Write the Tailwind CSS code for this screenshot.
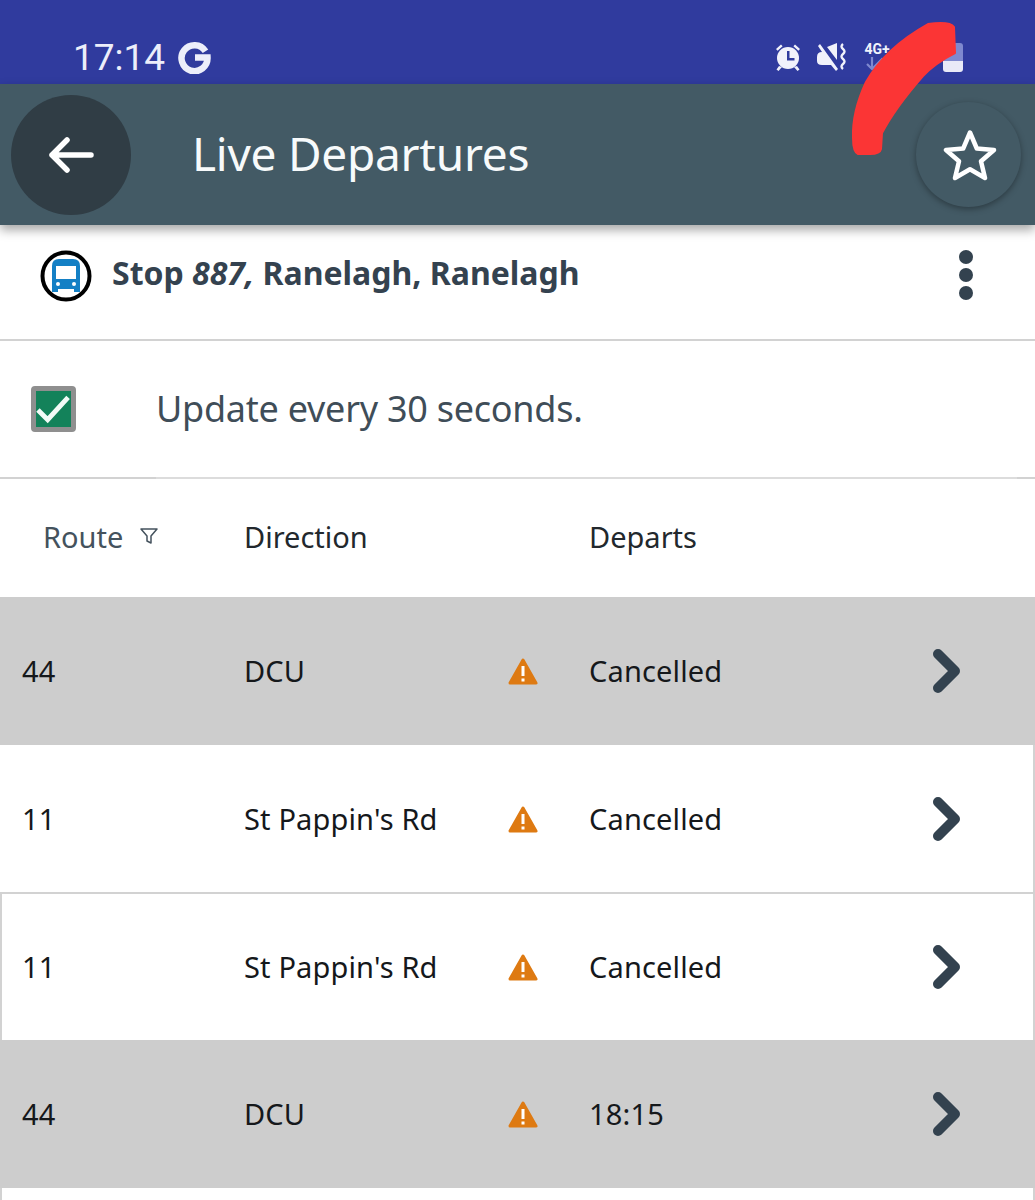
<!DOCTYPE html>
<html><head><meta charset="utf-8"><script src="https://cdn.jsdelivr.net/npm/@tailwindcss/browser@4"></script></head>
<body class="m-0 bg-white">
<div class="relative w-[1035px] h-[1200px] overflow-hidden bg-white font-['Noto_Sans','Open_Sans',sans-serif]">
  <!-- status bar -->
  <div class="h-[84px] bg-[#303b9e] flex items-end pb-[4px] pl-[73px] pr-[72px] text-[#eceefa]">
    <span class="font-['Roboto',sans-serif] text-[37px] leading-[44px]">17:14</span>
    <svg class="ml-[13px] mb-[6px] shrink-0" width="33" height="33" viewBox="0 0 33 33"><path d="M27.500 10.200A13 13 0 1 0 29.500 16.500H17" fill="none" stroke="#eceefa" stroke-width="6.500"/></svg>
    <div class="ml-auto flex items-center mb-[8px] shrink-0">
      <svg class="shrink-0" width="30" height="30" viewBox="0 0 30 30" fill="#f1f2fb"><path d="M3 7 8 2.500l1.600 1.800L4.600 8.800zM27 7l-5-4.500-1.600 1.800 5 4.500z"/><circle cx="15" cy="16" r="11"/><path d="M14 9h2.500v7h5v2.500H14z" fill="#303b9e"/><path d="M6 24 3.500 27.500 5.500 29 9 25zM24 24l2.500 3.500-2 1.500L21 25z"/></svg>
      <svg class="ml-[14px] shrink-0" width="32" height="30" viewBox="0 0 32 30" fill="#f1f2fb"><path d="M5 10 1 4l2-2 18 25-2 2-5-6H5q-5 0-5-4v-4q0-5 5-5zM10 5l10-4v17z"/><path d="M26 2q-3 2.500 0 5t0 5 0 5 0 5 0 5" fill="none" stroke="#f1f2fb" stroke-width="2.400"/></svg>
      <div class="ml-[11px] w-[34px] h-[30px] shrink-0 flex flex-col items-center">
        <span class="block font-['Roboto',sans-serif] font-bold text-[14px] leading-[15px] text-[#f1f2fb]">4G+</span>
        <svg width="24" height="14" viewBox="0 0 24 14" fill="none" stroke="#7f89cf" stroke-width="2.200"><path d="M7 0v12M2 7l5 5 5-5M17 14V2M12 7l5-5 5 5"/></svg>
      </div>
      <div class="ml-[49px] w-[20px] h-[29px] shrink-0 flex flex-col rounded-[3px] overflow-hidden">
        <div class="h-[18px] bg-[#7f89cf]"></div>
        <div class="h-[11px] bg-[#e9eaf8]"></div>
      </div>
    </div>
  </div>

  <!-- app header -->
  <div class="relative z-10 h-[141px] bg-[#435a65] shadow-[0_5px_10px_rgba(0,0,0,0.35)] flex items-center pl-[11px] pr-[14px]">
    <div class="w-[120px] h-[120px] rounded-full bg-[#303d45] flex items-center justify-center">
      <svg width="46" height="36" viewBox="0 0 46 36" fill="none" stroke="#fff" stroke-width="5.500" stroke-linecap="round" stroke-linejoin="round"><path d="M43 18H4M19 3 4 18l15 15"/></svg>
    </div>
    <span class="ml-[61px] -mt-[3px] text-[46px] leading-[56px] text-[#f7fafb] tracking-[-0.25px]">Live Departures</span>
    <div class="ml-auto w-[105px] h-[105px] rounded-full bg-[#435a65] shadow-[0_2px_6px_rgba(0,0,0,0.35)] flex items-center justify-center">
      <svg class="ml-[3px]" width="56" height="52" viewBox="0 0 56 52" fill="none" stroke="#fff" stroke-width="4.500" stroke-linejoin="round"><path d="M28 3.500 34.800 19.500 52 21 39 32.300 43 49 28 40.300 13 49 17 32.300 4 21 21.200 19.500z"/></svg>
    </div>
  </div>

  <!-- stop row -->
  <div class="h-[116px] border-b-2 border-[#d2d2d2] flex items-start pl-[40px] pr-[62px] pt-[25px]">
    <svg class="shrink-0" width="52" height="52" viewBox="0 0 52 52"><circle cx="26" cy="26" r="23.500" fill="#fff" stroke="#000" stroke-width="4"/><path d="M12 16q0-7 7-7h14q7 0 7 7v26h-6v-3H18v3h-6z" fill="#1480c5"/><path d="M16 16h20v13H16z" fill="#fff"/><circle cx="18" cy="34" r="2" fill="#fff"/><circle cx="34" cy="34" r="2" fill="#fff"/></svg>
    <span class="ml-[20px] mt-[1px] text-[32px] leading-[44px] font-bold text-[#34424f] whitespace-nowrap">Stop <em>887,</em> Ranelagh, Ranelagh</span>
    <div class="ml-auto flex flex-col gap-[4px]">
      <span class="block w-[14px] h-[14px] rounded-full bg-[#33424f]"></span>
      <span class="block w-[14px] h-[14px] rounded-full bg-[#33424f]"></span>
      <span class="block w-[14px] h-[14px] rounded-full bg-[#33424f]"></span>
    </div>
  </div>

  <!-- update row -->
  <div class="h-[138px] border-b-2 border-[#d2d2d2] flex pl-[31px] pr-[18px]">
    <div class="mt-[45px] w-[45px] h-[46px] rounded-[4px] border-[5px] border-[#8f8f8f] bg-[#13825a] flex items-center justify-center">
      <svg width="36" height="30" viewBox="0 0 36 30" fill="none" stroke="#f2fbf7" stroke-width="5"><path d="M2 16 12 26 33 3"/></svg>
    </div>
    <div class="ml-[80px] flex-1 border-b-2 border-[#dcdcdc] -mb-[2px] pt-[40px]">
      <span class="text-[36px] leading-[56px] text-[#3f4d58] tracking-[-0.25px]">Update every 30 seconds.</span>
    </div>
  </div>

  <!-- table head -->
  <div class="h-[118px] flex items-center text-[29px] leading-[40px] text-[#22282d] pb-[3px]">
    <div class="w-[244px] pl-[43px] flex items-center text-[#44525d]">
      <span>Route</span>
      <svg class="ml-[17px] mt-[-2px]" width="18" height="18" viewBox="0 0 18 18" fill="none" stroke="#44525d" stroke-width="1.500" stroke-linejoin="round"><path d="M1 2h16l-6 7v7l-4-2V9z"/></svg>
    </div>
    <div class="w-[345px]">Direction</div>
    <div>Departs</div>
  </div>

  <!-- rows -->
  <div class="h-[148px] bg-[#cdcdcd] flex items-center text-[29px] leading-[40px] tracking-[0.15px] text-[#15181b]">
    <div class="w-[244px] pl-[22px]">44</div><div class="w-[264px]">DCU</div>
    <svg width="30" height="28" viewBox="0 0 30 28" class="mt-[2px] shrink-0"><path d="M15 2 28 25H2z" fill="#de7a12" stroke="#de7a12" stroke-width="3" stroke-linejoin="round"/><path d="M15 8v10M15 20.500v3" stroke="#fff" stroke-width="3"/></svg>
    <div class="ml-[51px] w-[343px]">Cancelled</div>
    <svg width="30" height="44" viewBox="0 0 30 44" fill="none" stroke="#33424f" stroke-width="10" stroke-linecap="round" stroke-linejoin="round"><path d="M6 5 23 22 6 39"/></svg>
  </div>
  <div class="h-[149px] bg-white border-r-2 border-b-2 border-[#d2d2d2] flex items-center text-[29px] leading-[40px] tracking-[0.15px] text-[#15181b]">
    <div class="w-[244px] pl-[22px]">11</div><div class="w-[264px]">St Pappin's Rd</div>
    <svg width="30" height="28" viewBox="0 0 30 28" class="mt-[2px] shrink-0"><path d="M15 2 28 25H2z" fill="#de7a12" stroke="#de7a12" stroke-width="3" stroke-linejoin="round"/><path d="M15 8v10M15 20.500v3" stroke="#fff" stroke-width="3"/></svg>
    <div class="ml-[51px] w-[343px]">Cancelled</div>
    <svg width="30" height="44" viewBox="0 0 30 44" fill="none" stroke="#33424f" stroke-width="10" stroke-linecap="round" stroke-linejoin="round"><path d="M6 5 23 22 6 39"/></svg>
  </div>
  <div class="h-[146px] bg-white border-x-2 border-[#d2d2d2] flex items-center text-[29px] leading-[40px] tracking-[0.15px] text-[#15181b]">
    <div class="w-[242px] pl-[20px]">11</div><div class="w-[264px]">St Pappin's Rd</div>
    <svg width="30" height="28" viewBox="0 0 30 28" class="mt-[2px] shrink-0"><path d="M15 2 28 25H2z" fill="#de7a12" stroke="#de7a12" stroke-width="3" stroke-linejoin="round"/><path d="M15 8v10M15 20.500v3" stroke="#fff" stroke-width="3"/></svg>
    <div class="ml-[51px] w-[343px]">Cancelled</div>
    <svg width="30" height="44" viewBox="0 0 30 44" fill="none" stroke="#33424f" stroke-width="10" stroke-linecap="round" stroke-linejoin="round"><path d="M6 5 23 22 6 39"/></svg>
  </div>
  <div class="h-[148px] bg-[#cdcdcd] flex items-center text-[29px] leading-[40px] tracking-[0.15px] text-[#15181b]">
    <div class="w-[244px] pl-[22px]">44</div><div class="w-[264px]">DCU</div>
    <svg width="30" height="28" viewBox="0 0 30 28" class="mt-[2px] shrink-0"><path d="M15 2 28 25H2z" fill="#de7a12" stroke="#de7a12" stroke-width="3" stroke-linejoin="round"/><path d="M15 8v10M15 20.500v3" stroke="#fff" stroke-width="3"/></svg>
    <div class="ml-[51px] w-[343px]">18:15</div>
    <svg width="30" height="44" viewBox="0 0 30 44" fill="none" stroke="#33424f" stroke-width="10" stroke-linecap="round" stroke-linejoin="round"><path d="M6 5 23 22 6 39"/></svg>
  </div>
  <div class="h-[12px] bg-white border-x-2 border-[#d2d2d2]"></div>

  <!-- red scribble over the screenshot -->
  <svg class="absolute left-0 top-0 z-20" width="1035" height="200" viewBox="0 0 1035 200"><path d="M928 24Q950 21 954 27L955 53Q935 63 923 76 895 108 882 133L881 149Q880 154 870 154L858 154Q853 152 853 138 852 112 866 82 885 48 928 24Z" fill="#fb3535" stroke="#fb3535" stroke-width="2" stroke-linejoin="round"/></svg>
</div>
</body></html>
